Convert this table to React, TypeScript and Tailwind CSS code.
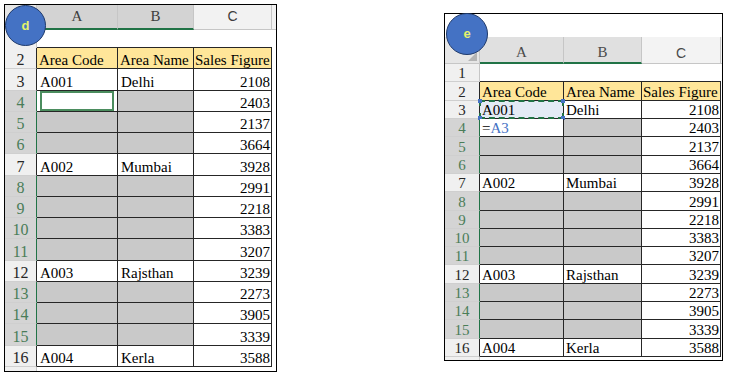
type Row = { n: number; a?: string; b?: string; c: string; gray?: boolean };

const rows: Row[] = [
  { n: 3, a: 'A001', b: 'Delhi', c: '2108' },
  { n: 4, c: '2403', gray: true },
  { n: 5, c: '2137', gray: true },
  { n: 6, c: '3664', gray: true },
  { n: 7, a: 'A002', b: 'Mumbai', c: '3928' },
  { n: 8, c: '2991', gray: true },
  { n: 9, c: '2218', gray: true },
  { n: 10, c: '3383', gray: true },
  { n: 11, c: '3207', gray: true },
  { n: 12, a: 'A003', b: 'Rajsthan', c: '3239' },
  { n: 13, c: '2273', gray: true },
  { n: 14, c: '3905', gray: true },
  { n: 15, c: '3339', gray: true },
  { n: 16, a: 'A004', b: 'Kerla', c: '3588' },
];

function Badge({ letter }: { letter: string }) {
  return (
    <div className="w-full h-full rounded-full bg-[#4472c4] border border-[#1f3a6b] flex items-center justify-center [font-family:'Liberation_Sans',sans-serif] font-bold text-[13px] text-[#e4f26c]">
      {letter}
    </div>
  );
}

function LeftSheet() {
  return (
    <div className="relative w-[273px] h-[368px] border border-black bg-white flex flex-col [font-family:'Liberation_Serif',serif] text-[15px] text-black">
      <div className="absolute left-0 top-0 w-[41px] h-[41px]">
        <Badge letter="d" />
      </div>
      {/* column headers */}
      <div className="grid grid-cols-[32px_81px_76px_78px_1fr] h-[23px] shrink-0 text-[#3d3d3d]">
        <div className="bg-[#e6e6e6] border-r border-b border-[#c6c6c6]" />
        <div className="bg-[#d3d3d3] border-r border-r-[#c6c6c6] border-b-2 border-b-[#217346] flex items-center justify-center">A</div>
        <div className="bg-[#d3d3d3] border-r border-r-[#c6c6c6] border-b-2 border-b-[#217346] flex items-center justify-center">B</div>
        <div className="bg-[#f2f2f2] border-r border-b border-[#c6c6c6] flex items-center justify-center [font-family:'Liberation_Sans',sans-serif] text-[14px]">C</div>
        <div className="bg-[#f2f2f2] border-b border-[#c6c6c6]" />
      </div>
      {/* row 1 */}
      <div className="grid grid-cols-[32px_81px_76px_78px_1fr] h-[20px] shrink-0">
        <div className="bg-[#f0f0f0] border-r border-[#c6c6c6]" />
        <div className="border-b border-[#262626]" />
        <div className="border-b border-[#262626]" />
        <div className="border-b border-[#262626]" />
        <div />
      </div>
      {/* row 2 */}
      <div className="grid grid-cols-[32px_81px_76px_78px_1fr] h-[21.27px] shrink-0">
        <div className="bg-[#f0f0f0] border-r border-r-[#262626] border-b border-b-[#cfcfcf] flex items-end justify-center leading-[16px] text-[16px] text-[#262626]">2</div>
        <div className="bg-[#ffe699] border-r border-b border-[#262626] flex items-end px-[2px] leading-[15px]">Area Code</div>
        <div className="bg-[#ffe699] border-r border-b border-[#262626] flex items-end px-[2px] leading-[15px]">Area Name</div>
        <div className="bg-[#ffe699] border-r border-b border-[#262626] flex items-end px-[1px] leading-[15px] whitespace-nowrap">Sales Figure</div>
        <div />
      </div>
      {rows.map((r) => (
        <div key={r.n} className="grid grid-cols-[32px_81px_76px_78px_1fr] h-[21.27px] shrink-0">
          <div
            className={`border-r border-b border-b-[#cfcfcf] flex items-end justify-center leading-[16px] text-[16px] ${
              r.gray ? 'bg-[#d4d4d4] text-[#4a7d58] border-r-[#217346]' : 'bg-[#f0f0f0] text-[#262626] border-r-[#262626]'
            }`}>
            {r.n}
          </div>
          <div className={`border-r border-b border-[#262626] flex items-end px-[3px] leading-[15px] ${r.gray && r.n !== 4 ? 'bg-[#c9c9c9]' : 'bg-white'}`}>
            {r.n === 4 ? <div className="w-full h-full border-2 border-[#4b8d5e]" /> : r.a}
          </div>
          <div className={`border-r border-b border-[#262626] flex items-end px-[3px] leading-[15px] ${r.gray ? 'bg-[#c9c9c9]' : 'bg-white'}`}>{r.b}</div>
          <div className="border-r border-b border-[#262626] flex items-end justify-end px-[1px] leading-[15px]">{r.c}</div>
          <div />
        </div>
      ))}
      <div className="grid grid-cols-[32px_1fr] flex-1">
        <div className="bg-[#f0f0f0] border-r border-[#c6c6c6]" />
        <div />
      </div>
    </div>
  );
}

function RightSheet() {
  return (
    <div className="relative w-[279px] h-[348px] border border-black bg-white flex flex-col [font-family:'Liberation_Serif',serif] text-[15px] text-black">
      <div className="absolute left-[1px] -top-[1px] w-[42px] h-[42px] z-10">
        <Badge letter="e" />
      </div>
      {/* formula strip */}
      <div className="h-[23px] shrink-0 bg-white" />
      {/* column headers */}
      <div className="grid grid-cols-[35px_84px_78px_79px_1fr] h-[27px] shrink-0 text-[#4a4a4a]">
        <div className="relative bg-[#e6e6e6] border-r border-b border-[#c6c6c6]">
          <div className="absolute right-[2px] bottom-[2px] w-0 h-0 border-l-[9px] border-l-transparent border-b-[9px] border-b-[#b4b4b4]" />
        </div>
        <div className="bg-[#e0e0e0] border-r border-r-[#c6c6c6] border-b-2 border-b-[#217346] flex items-end justify-center pb-[2px] leading-[15px]">A</div>
        <div className="bg-[#e0e0e0] border-r border-r-[#c6c6c6] border-b-2 border-b-[#217346] flex items-end justify-center pb-[2px] leading-[15px]">B</div>
        <div className="bg-[#f3f3f3] border-r border-b border-[#c6c6c6] flex items-end justify-center pb-[3px] leading-[14px] [font-family:'Liberation_Sans',sans-serif] text-[14px]">C</div>
        <div className="bg-[#f3f3f3] border-b border-[#c6c6c6]" />
      </div>
      {/* row 1 */}
      <div className="grid grid-cols-[35px_84px_78px_79px_1fr] h-[18.3125px] shrink-0">
        <div className="bg-[#f0f0f0] border-r border-r-[#c6c6c6] border-b border-b-[#cfcfcf] flex items-end justify-center leading-[15px] text-[#262626]">1</div>
        <div className="border-b border-[#262626]" />
        <div className="border-b border-[#262626]" />
        <div className="border-b border-[#262626]" />
        <div />
      </div>
      {/* row 2 */}
      <div className="grid grid-cols-[35px_84px_78px_79px_1fr] h-[18.3125px] shrink-0">
        <div className="bg-[#f0f0f0] border-r border-r-[#262626] border-b border-b-[#cfcfcf] flex items-end justify-center leading-[15px] text-[#262626]">2</div>
        <div className="bg-[#ffe699] border-r border-b border-[#262626] flex items-end px-[2px] leading-[15px]">Area Code</div>
        <div className="bg-[#ffe699] border-r border-b border-[#262626] flex items-end px-[2px] leading-[15px]">Area Name</div>
        <div className="bg-[#ffe699] border-r border-b border-[#262626] flex items-end px-[1px] leading-[15px] whitespace-nowrap">Sales Figure</div>
        <div />
      </div>
      {rows.map((r) => (
        <div key={r.n} className="grid grid-cols-[35px_84px_78px_79px_1fr] h-[18.3125px] shrink-0">
          <div
            className={`border-r border-b border-b-[#cfcfcf] flex items-end justify-center leading-[15px] ${
              r.gray ? 'bg-[#d4d4d4] text-[#4a7d58] border-r-[#217346]' : 'bg-[#f0f0f0] text-[#262626] border-r-[#262626]'
            }`}>
            {r.n}
          </div>
          <div
            className={`relative border-r border-b border-[#262626] flex items-end px-[2px] leading-[15px] ${
              r.n === 3 ? 'bg-[#e3eaf5]' : r.gray && r.n !== 4 ? 'bg-[#c9c9c9]' : 'bg-white'
            }`}>
            {r.n === 3 && (
              <>
                <div className="absolute -left-[1px] -top-[1px] -right-[1px] -bottom-[1px] border-2 border-dashed border-[#217346]" />
                <div className="absolute -left-[2px] -top-[2px] w-[4px] h-[4px] bg-[#4472c4]" />
                <div className="absolute -right-[2px] -top-[2px] w-[4px] h-[4px] bg-[#4472c4]" />
                <div className="absolute -left-[2px] -bottom-[2px] w-[4px] h-[4px] bg-[#4472c4]" />
                <div className="absolute -right-[2px] -bottom-[2px] w-[4px] h-[4px] bg-[#4472c4]" />
              </>
            )}
            {r.n === 4 ? (
              <span>
                =<span className="text-[#4472c4]">A3</span>
              </span>
            ) : (
              r.a
            )}
          </div>
          <div className={`border-r border-b border-[#262626] flex items-end px-[2px] leading-[15px] ${r.gray ? 'bg-[#c9c9c9]' : 'bg-white'}`}>{r.b}</div>
          <div className="border-r border-b border-[#262626] flex items-end justify-end px-[1px] leading-[15px]">{r.c}</div>
          <div />
        </div>
      ))}
      <div className="grid grid-cols-[35px_1fr] flex-1">
        <div className="bg-[#f0f0f0] border-r border-[#c6c6c6]" />
        <div />
      </div>
    </div>
  );
}

export default function App() {
  return (
    <div className="w-[729px] h-[379px] bg-white flex items-start pl-[4px] pt-[4px]">
      <LeftSheet />
      <div className="ml-[167px] mt-[9px]">
        <RightSheet />
      </div>
    </div>
  );
}
